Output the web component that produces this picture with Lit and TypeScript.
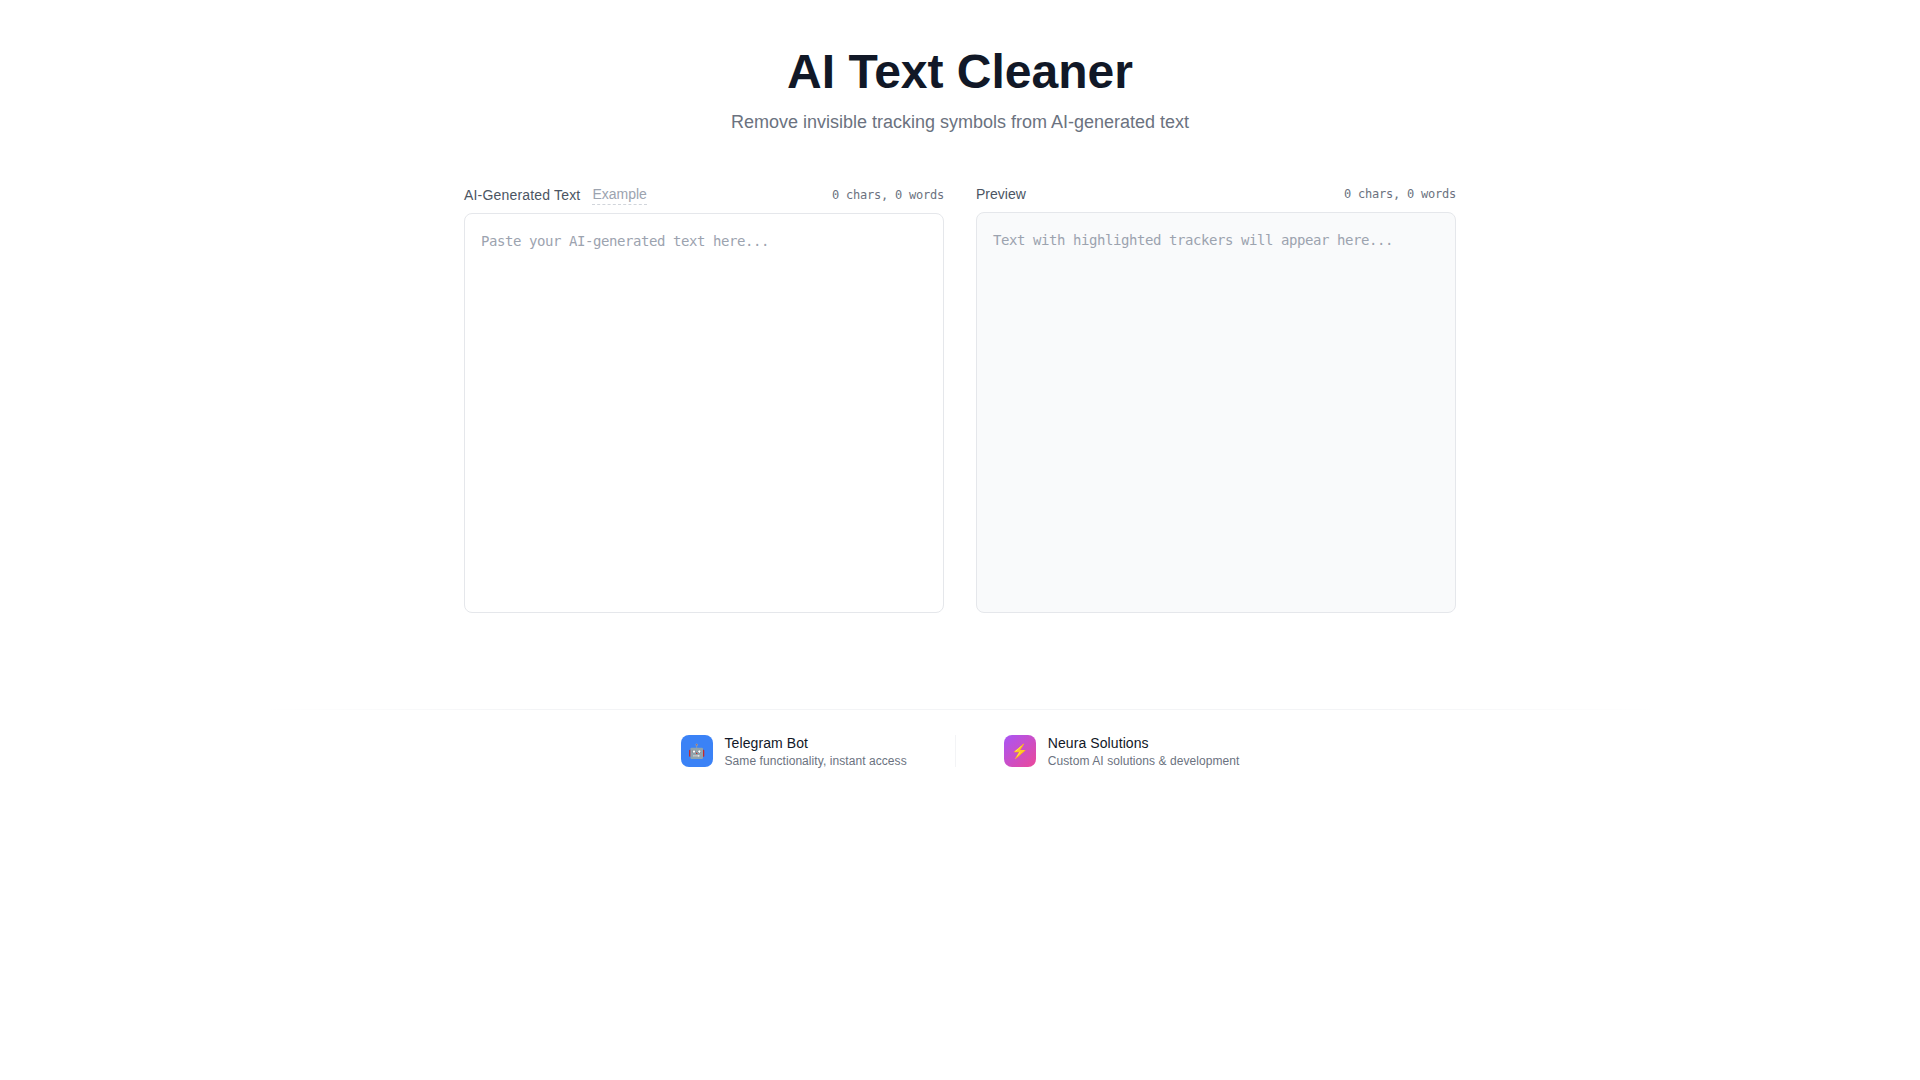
import { html, css, LitElement } from 'lit';
import { customElement, state } from 'lit/decorators.js';

@customElement('app-root')
export class AppRoot extends LitElement {
  @state() private text = '';

  private get stats() {
    const t = this.text.trim();
    return `${this.text.length} chars, ${t ? t.split(/\s+/).length : 0} words`;
  }

  private onInput(e: Event) {
    this.text = (e.target as HTMLTextAreaElement).value;
  }

  render() {
    return html`
      <main class="page">
        <header class="head">
          <h1>AI Text Cleaner</h1>
          <p>Remove invisible tracking symbols from AI-generated text</p>
        </header>

        <section class="panels">
          <div class="panel">
            <div class="panel-head">
              <div class="labels">
                <label for="src">AI-Generated Text</label>
                <button class="example">Example</button>
              </div>
              <span class="count">${this.stats}</span>
            </div>
            <textarea
              id="src"
              placeholder="Paste your AI-generated text here..."
              .value=${this.text}
              @input=${this.onInput}
            ></textarea>
          </div>

          <div class="panel">
            <div class="panel-head">
              <span class="label">Preview</span>
              <span class="count">${this.stats}</span>
            </div>
            <div class="preview">${this.text || html`<span class="empty">Text with highlighted trackers will appear here...</span>`}</div>
          </div>
        </section>

        <footer class="foot">
          <a class="link">
            <span class="icon blue">🤖</span>
            <span class="link-text">
              <span class="link-title">Telegram Bot</span>
              <span class="link-sub">Same functionality, instant access</span>
            </span>
          </a>
          <span class="divider"></span>
          <a class="link">
            <span class="icon purple">⚡</span>
            <span class="link-text">
              <span class="link-title">Neura Solutions</span>
              <span class="link-sub">Custom AI solutions &amp; development</span>
            </span>
          </a>
        </footer>
      </main>
    `;
  }

  static styles = css`
    :host {
      display: block;
      min-height: 1080px;
      background: #fff;
      font-family: 'Liberation Sans', Arial, sans-serif;
      color: #111827;
    }

    .page {
      display: flex;
      flex-direction: column;
      align-items: center;
    }

    .head {
      padding-top: 48px;
      margin-bottom: 48px;
      text-align: center;
    }

    h1 {
      margin: 0 0 12px;
      font-size: 48px;
      line-height: 48px;
      font-weight: 700;
    }

    .head p {
      margin: 0;
      font-size: 18px;
      line-height: 28px;
      color: #6b7280;
    }

    .panels {
      display: grid;
      grid-template-columns: 480px 480px;
      gap: 32px;
      height: 429px;
    }

    .panel {
      display: flex;
      flex-direction: column;
      min-height: 0;
    }

    .panel-head {
      display: flex;
      align-items: center;
      justify-content: space-between;
      margin-bottom: 8px;
    }

    .labels {
      display: flex;
      align-items: center;
      gap: 12px;
    }

    label,
    .label {
      font-size: 14px;
      line-height: 20px;
      color: #4b5563;
    }

    label {
      letter-spacing: 0.18px;
    }

    .example {
      padding: 0;
      border: 0;
      border-bottom: 1px dashed #d1d5db;
      background: none;
      font: inherit;
      font-size: 14px;
      line-height: 20px;
      color: #9ca3af;
      cursor: pointer;
    }

    .count {
      font-family: 'DejaVu Sans Mono', monospace;
      font-size: 12px;
      line-height: 16px;
      letter-spacing: -0.22px;
      color: #6b7280;
    }

    textarea,
    .preview {
      flex: 1;
      box-sizing: border-box;
      width: 100%;
      min-height: 0;
      margin: 0;
      padding: 17px 16px 15px;
      border: 1px solid #e5e7eb;
      border-radius: 8px;
      font-family: 'DejaVu Sans Mono', monospace;
      font-size: 14px;
      line-height: 20px;
      letter-spacing: -0.43px;
      color: #111827;
      outline: none;
      resize: none;
    }

    textarea {
      display: block;
      background: #fff;
    }

    textarea::placeholder,
    .empty {
      color: #9ca3af;
      opacity: 1;
    }

    .preview {
      background: #f9fafb;
      white-space: pre-wrap;
    }

    .foot {
      position: relative;
      display: flex;
      justify-content: center;
      align-items: center;
      gap: 48px;
      width: 1400px;
      margin-top: 96px;
      padding: 24px 0;
    }

    .foot::before {
      content: '';
      position: absolute;
      top: 0;
      left: 0;
      right: 0;
      height: 1px;
      background: linear-gradient(to right, transparent, #f3f4f6 20%, #f3f4f6 80%, transparent);
    }

    .link {
      display: flex;
      align-items: center;
      gap: 12px;
      cursor: pointer;
    }

    .icon {
      display: flex;
      align-items: center;
      justify-content: center;
      width: 32px;
      height: 32px;
      border-radius: 8px;
      font-size: 14px;
      color: #fff;
    }

    .blue {
      background: #3b82f6;
    }

    .purple {
      background: linear-gradient(135deg, #a855f7, #ec4899);
    }

    .link-text {
      display: flex;
      flex-direction: column;
    }

    .link-title {
      font-size: 14px;
      line-height: 20px;
      letter-spacing: 0.09px;
      color: #111827;
    }

    .link-sub {
      font-size: 12px;
      line-height: 16px;
      letter-spacing: 0.07px;
      color: #6b7280;
    }

    .divider {
      width: 1px;
      height: 32px;
      background: #f3f4f6;
    }
  `;
}
